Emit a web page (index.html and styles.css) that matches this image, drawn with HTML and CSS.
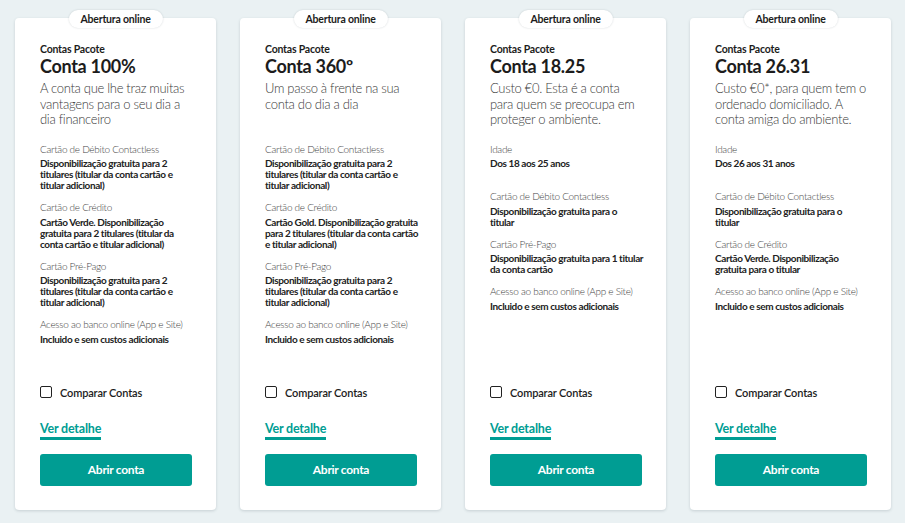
FILE: index.html
```html
<!DOCTYPE html>
<html lang="pt">
<head>
<meta charset="utf-8">
<title>Contas Pacote</title>
<link rel="stylesheet" href="styles.css">
</head>
<body>
<div class="cards">
  <div class="card">
    <span class="badge">Abertura online</span>
    <div class="kicker">Contas Pacote</div>
    <h2 class="title">Conta 100%</h2>
    <p class="desc">A conta que lhe traz muitas vantagens para o seu dia a dia financeiro</p>
    <div class="specs">
      <div class="item"><div class="label">Cartão de Débito Contactless</div><div class="value">Disponibilização gratuita para 2 titulares (titular da conta cartão e titular adicional)</div></div>
      <div class="item"><div class="label">Cartão de Crédito</div><div class="value">Cartão Verde. Disponibilização gratuita para 2 titulares (titular da conta cartão e titular adicional)</div></div>
      <div class="item"><div class="label">Cartão Pré-Pago</div><div class="value">Disponibilização gratuita para 2 titulares (titular da conta cartão e titular adicional)</div></div>
      <div class="item"><div class="label">Acesso ao banco online (App e Site)</div><div class="value">Incluido e sem custos adicionais</div></div>
    </div>
    <div class="actions">
      <label class="compare"><span class="box"></span>Comparar Contas</label>
      <a class="detail" href="#">Ver detalhe</a>
      <a class="btn" href="#">Abrir conta</a>
    </div>
  </div>
  <div class="card">
    <span class="badge">Abertura online</span>
    <div class="kicker">Contas Pacote</div>
    <h2 class="title">Conta 360º</h2>
    <p class="desc">Um passo à frente na sua conta do dia a dia</p>
    <div class="specs">
      <div class="item"><div class="label">Cartão de Débito Contactless</div><div class="value">Disponibilização gratuita para 2 titulares (titular da conta cartão e titular adicional)</div></div>
      <div class="item"><div class="label">Cartão de Crédito</div><div class="value">Cartão Gold. Disponibilização gratuita para 2 titulares (titular da conta cartão e titular adicional)</div></div>
      <div class="item"><div class="label">Cartão Pré-Pago</div><div class="value">Disponibilização gratuita para 2 titulares (titular da conta cartão e titular adicional)</div></div>
      <div class="item"><div class="label">Acesso ao banco online (App e Site)</div><div class="value">Incluido e sem custos adicionais</div></div>
    </div>
    <div class="actions">
      <label class="compare"><span class="box"></span>Comparar Contas</label>
      <a class="detail" href="#">Ver detalhe</a>
      <a class="btn" href="#">Abrir conta</a>
    </div>
  </div>
  <div class="card">
    <span class="badge">Abertura online</span>
    <div class="kicker">Contas Pacote</div>
    <h2 class="title">Conta 18.25</h2>
    <p class="desc">Custo €0. Esta é a conta para quem se preocupa em proteger o ambiente.</p>
    <div class="specs">
      <div class="item age"><div class="label">Idade</div><div class="value">Dos 18 aos 25 anos</div></div>
      <div class="item"><div class="label">Cartão de Débito Contactless</div><div class="value">Disponibilização gratuita para o<br>titular</div></div>
      <div class="item"><div class="label">Cartão Pré-Pago</div><div class="value">Disponibilização gratuita para 1 titular da conta cartão</div></div>
      <div class="item"><div class="label">Acesso ao banco online (App e Site)</div><div class="value">Incluido e sem custos adicionais</div></div>
    </div>
    <div class="actions">
      <label class="compare"><span class="box"></span>Comparar Contas</label>
      <a class="detail" href="#">Ver detalhe</a>
      <a class="btn" href="#">Abrir conta</a>
    </div>
  </div>
  <div class="card">
    <span class="badge">Abertura online</span>
    <div class="kicker">Contas Pacote</div>
    <h2 class="title">Conta 26.31</h2>
    <p class="desc">Custo €0*, para quem tem o ordenado domiciliado. A conta amiga do ambiente.</p>
    <div class="specs">
      <div class="item age"><div class="label">Idade</div><div class="value">Dos 26 aos 31 anos</div></div>
      <div class="item"><div class="label">Cartão de Débito Contactless</div><div class="value">Disponibilização gratuita para o<br>titular</div></div>
      <div class="item"><div class="label">Cartão de Crédito</div><div class="value">Cartão Verde. Disponibilização gratuita para o titular</div></div>
      <div class="item"><div class="label">Acesso ao banco online (App e Site)</div><div class="value">Incluido e sem custos adicionais</div></div>
    </div>
    <div class="actions">
      <label class="compare"><span class="box"></span>Comparar Contas</label>
      <a class="detail" href="#">Ver detalhe</a>
      <a class="btn" href="#">Abrir conta</a>
    </div>
  </div>
</div>
</body>
</html>
```

FILE: styles.css
```css
* { box-sizing: border-box; }
html, body { margin: 0; padding: 0; }
body {
  background: #eaf1f3;
  font-family: Lato, "Liberation Sans", sans-serif;
  color: #222;
  width: 905px;
  height: 523px;
  overflow: hidden;
}
.cards {
  display: flex;
  gap: 24px;
  padding: 18px 0 0 15px;
}
.card {
  position: relative;
  width: 201px;
  height: 492px;
  background: #fff;
  border-radius: 4px;
  box-shadow: 0 1px 3px rgba(40, 60, 70, 0.18);
  padding: 24px 21px 24px 25px;
  display: flex;
  flex-direction: column;
}
.badge {
  position: absolute;
  top: -8px;
  left: 50%;
  transform: translateX(-50%);
  height: 18px;
  line-height: 18px;
  padding: 0 12px;
  background: #fff;
  border-radius: 9px;
  box-shadow: 0 0 2px rgba(40, 60, 70, 0.2);
  font-size: 10.5px;
  font-weight: 700;
  letter-spacing: -0.2px;
  color: #1c1c1c;
  white-space: nowrap;
}
.kicker {
  font-size: 10.5px;
  font-weight: 700;
  letter-spacing: -0.2px;
  line-height: 14px;
  color: #1c1c1c;
}
.title {
  margin: 0;
  font-size: 18px;
  font-weight: 700;
  letter-spacing: -0.3px;
  line-height: 20px;
  color: #1c1c1c;
}
.desc {
  margin: 5px 0 0;
  font-size: 13px;
  font-weight: 300;
  letter-spacing: -0.3px;
  line-height: 15.5px;
  min-height: 46.5px;
  color: #3a3a3a;
}
.specs {
  margin-top: 15px;
}
.item {
  margin-bottom: 10px;
}
.item.age {
  margin-bottom: 21px;
}
.label {
  font-size: 10px;
  font-weight: 300;
  letter-spacing: -0.3px;
  line-height: 13px;
  color: #444;
}
.value {
  margin-top: 2.5px;
  font-size: 10px;
  font-weight: 700;
  letter-spacing: -0.4px;
  line-height: 11px;
  color: #222;
}
.actions {
  margin-top: auto;
  display: flex;
  flex-direction: column;
  align-items: flex-start;
}
.compare {
  display: flex;
  align-items: center;
  gap: 8px;
  height: 14px;
  font-size: 11px;
  font-weight: 600;
  letter-spacing: -0.15px;
  color: #1c1c1c;
}
.box {
  width: 12px;
  height: 12px;
  border: 1.5px solid #222;
  border-radius: 2px;
}
.detail {
  margin-top: 22px;
  font-size: 12.5px;
  font-weight: 700;
  letter-spacing: -0.2px;
  line-height: 16px;
  color: #009d93;
  text-decoration: none;
  border-bottom: 3px solid #009d93;
}
.btn {
  margin-top: 14px;
  width: 152px;
  height: 32px;
  line-height: 32px;
  background: #009d93;
  border-radius: 3px;
  color: #fff;
  text-align: center;
  font-size: 12px;
  font-weight: 700;
  letter-spacing: -0.3px;
  text-decoration: none;
}
```
